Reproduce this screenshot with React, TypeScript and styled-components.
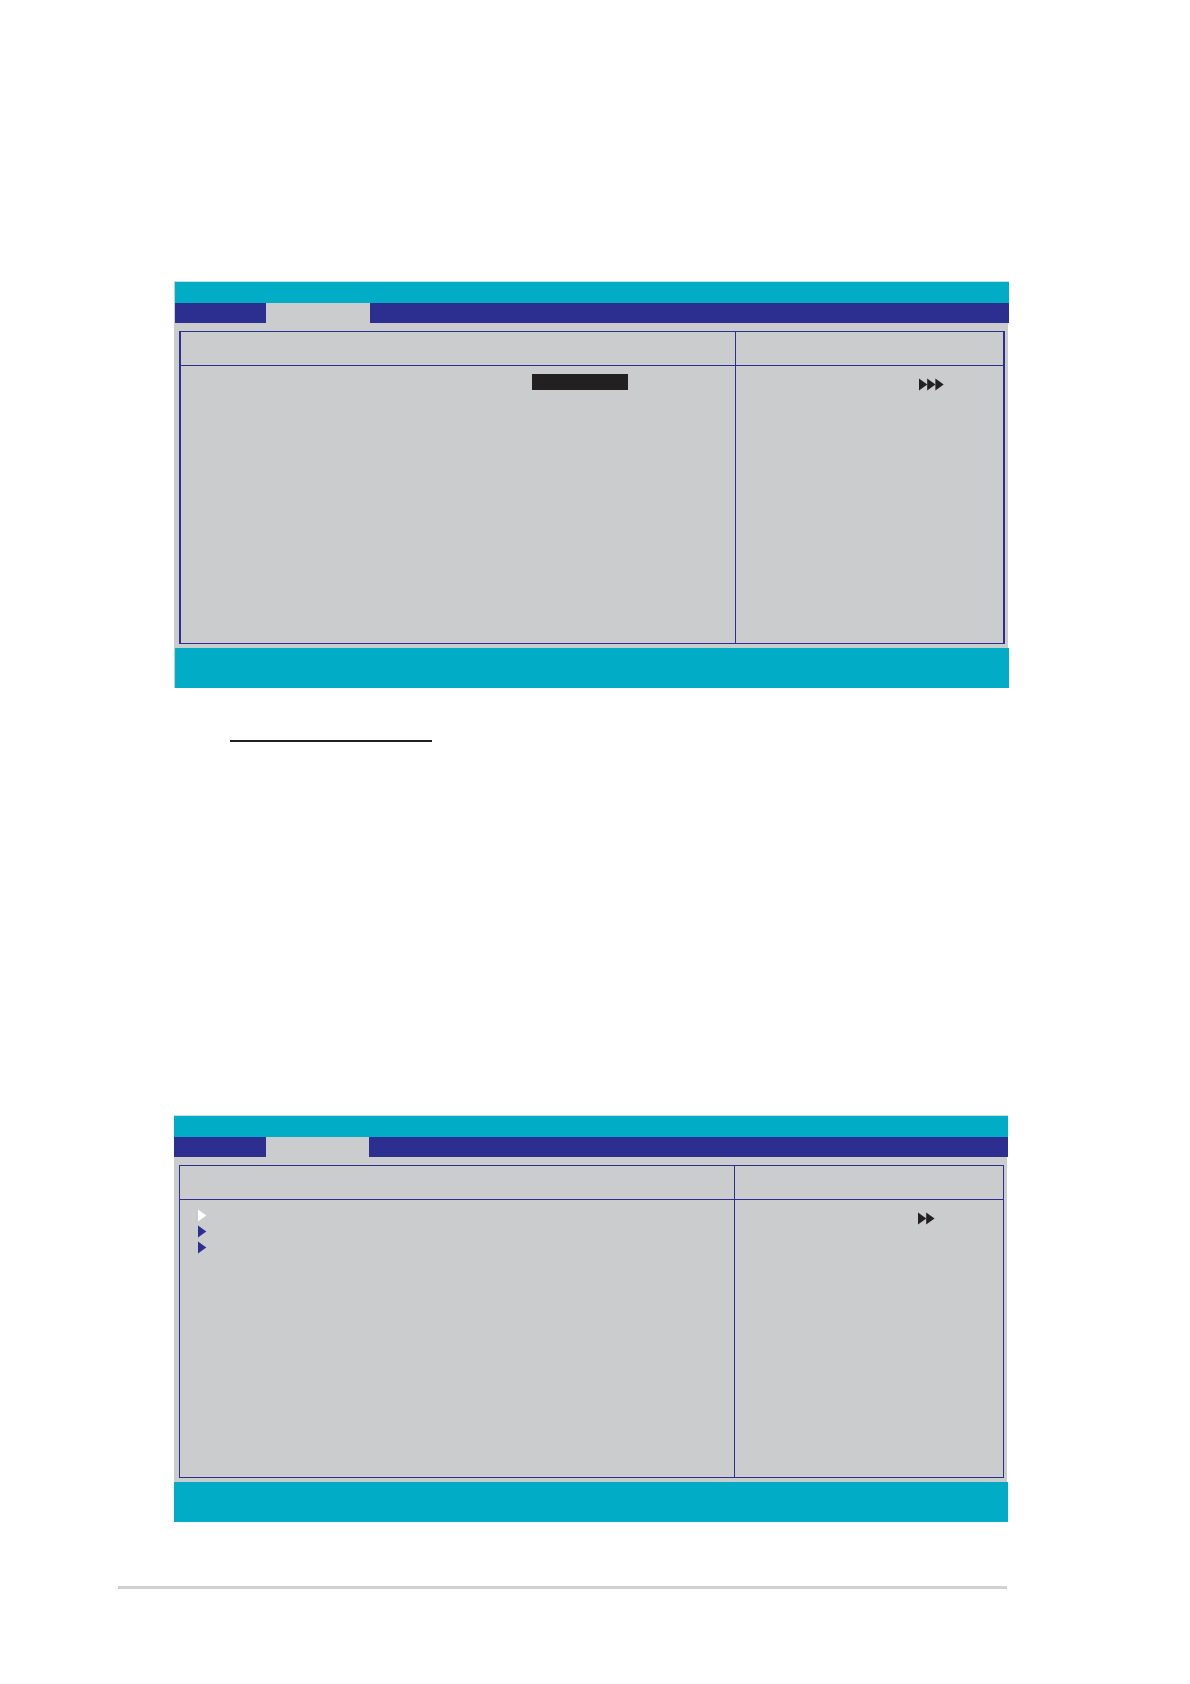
import React from "react";
import styled, { createGlobalStyle } from "styled-components";

const cyan = "#00acc6";
const navy = "#2c2e90";
const grey = "#cbccce";
const ink = "#222021";

const GlobalStyle = createGlobalStyle`
  * { box-sizing: border-box; }
  body { margin: 0; background: #ffffff; font-family: "Liberation Sans", sans-serif; }
`;

const Page = styled.main`
  display: flex;
  flex-direction: column;
  padding: 281px 181px 95px 118px;
`;

const Screen = styled.section<{ $inset?: boolean }>`
  display: flex;
  flex-direction: column;
  margin-left: 56px;
  margin-right: ${(p) => (p.$inset ? "0" : "1px")};
  border-top: 1px solid #c9dfe4;
  border-left: ${(p) => (p.$inset ? `1px solid ${grey}` : "none")};
`;

const TitleBar = styled.header`
  height: 21px;
  background: ${cyan};
`;

const TabBar = styled.nav<{ $lead: number }>`
  display: flex;
  height: 20px;
  padding-left: ${(p) => p.$lead}px;
  background: ${navy};
`;

const Tab = styled.button<{ $width: number }>`
  width: ${(p) => p.$width}px;
  padding: 0;
  border: 0;
  background: ${grey};
`;

const Body = styled.div<{ $inset?: boolean }>`
  display: flex;
  margin-right: 1px;
  padding: 8px 3px 4px ${(p) => (p.$inset ? "4px" : "5px")};
  background: ${grey};
`;

const Frame = styled.div<{ $side: number }>`
  display: grid;
  grid-template-columns: minmax(0, 1fr) ${(p) => 270 - p.$side}px;
  flex: 1;
  border: 1px solid ${navy};
  border-left-width: ${(p) => p.$side}px;
  border-right-width: ${(p) => p.$side}px;
`;

const Column = styled.div<{ $divided?: boolean }>`
  display: flex;
  flex-direction: column;
  border-left: ${(p) => (p.$divided ? `1px solid ${navy}` : "none")};
`;

const Heading = styled.div`
  height: 34px;
  border-bottom: 1px solid ${navy};
`;

const Content = styled.div`
  min-height: 277px;
`;

const FieldRow = styled.div`
  display: flex;
  justify-content: flex-end;
  padding: 8px 107px 0 0;
`;

const FieldValue = styled.button`
  width: 96px;
  height: 16px;
  padding: 0;
  border: 0;
  background: ${ink};
`;

const MenuList = styled.div`
  display: flex;
  flex-direction: column;
  padding: 7px 18px;
`;

const MenuItem = styled.button`
  display: flex;
  align-items: center;
  height: 16px;
  padding: 0;
  border: 0;
  background: transparent;
`;

const HelpRow = styled.div`
  display: flex;
  padding: 12px 0 0 183px;
`;

const FooterBar = styled.footer`
  height: 40px;
  background: ${cyan};
`;

const SectionRule = styled.hr`
  width: 202px;
  height: 2px;
  margin: 52px 0 373px 112px;
  border: 0;
  background: ${ink};
`;

const PageRule = styled.hr`
  width: auto;
  height: 3px;
  margin: 64px 2px 0 0;
  border: 0;
  background: #d0d0d0;
`;

function Arrows({ count = 1, color = ink }: { count?: number; color?: string }) {
  return (
    <svg width={count * 8 + 2} height="13" viewBox={`0 0 ${count * 8 + 2} 13`} aria-hidden="true">
      {Array.from({ length: count }, (_, i) => (
        <path key={i} d={`M${i * 8.2} 0.5 L${i * 8.2 + 8.3} 6.5 L${i * 8.2} 12.5 Z`} fill={color} />
      ))}
    </svg>
  );
}

interface SetupScreenProps {
  inset?: boolean;
  tabWidth: number;
  arrows: number;
  children: React.ReactNode;
}

function SetupScreen({ inset, tabWidth, arrows, children }: SetupScreenProps) {
  return (
    <Screen $inset={inset}>
      <TitleBar />
      <TabBar $lead={inset ? 91 : 92}>
        <Tab type="button" aria-label="Active tab" $width={tabWidth} />
      </TabBar>
      <Body $inset={inset}>
        <Frame $side={inset ? 2 : 1}>
          <Column>
            <Heading />
            <Content>{children}</Content>
          </Column>
          <Column $divided>
            <Heading />
            <HelpRow>
              <Arrows count={arrows} />
            </HelpRow>
          </Column>
        </Frame>
      </Body>
      <FooterBar />
    </Screen>
  );
}

export default function App() {
  return (
    <>
      <GlobalStyle />
      <Page>
        <SetupScreen inset tabWidth={104} arrows={3}>
          <FieldRow>
            <FieldValue type="button" aria-label="Selected value" />
          </FieldRow>
        </SetupScreen>
        <SectionRule />
        <SetupScreen tabWidth={103} arrows={2}>
          <MenuList>
            {["#ffffff", navy, navy].map((color, i) => (
              <MenuItem key={i} type="button" aria-label={`Submenu ${i + 1}`}>
                <Arrows color={color} />
              </MenuItem>
            ))}
          </MenuList>
        </SetupScreen>
        <PageRule />
      </Page>
    </>
  );
}
